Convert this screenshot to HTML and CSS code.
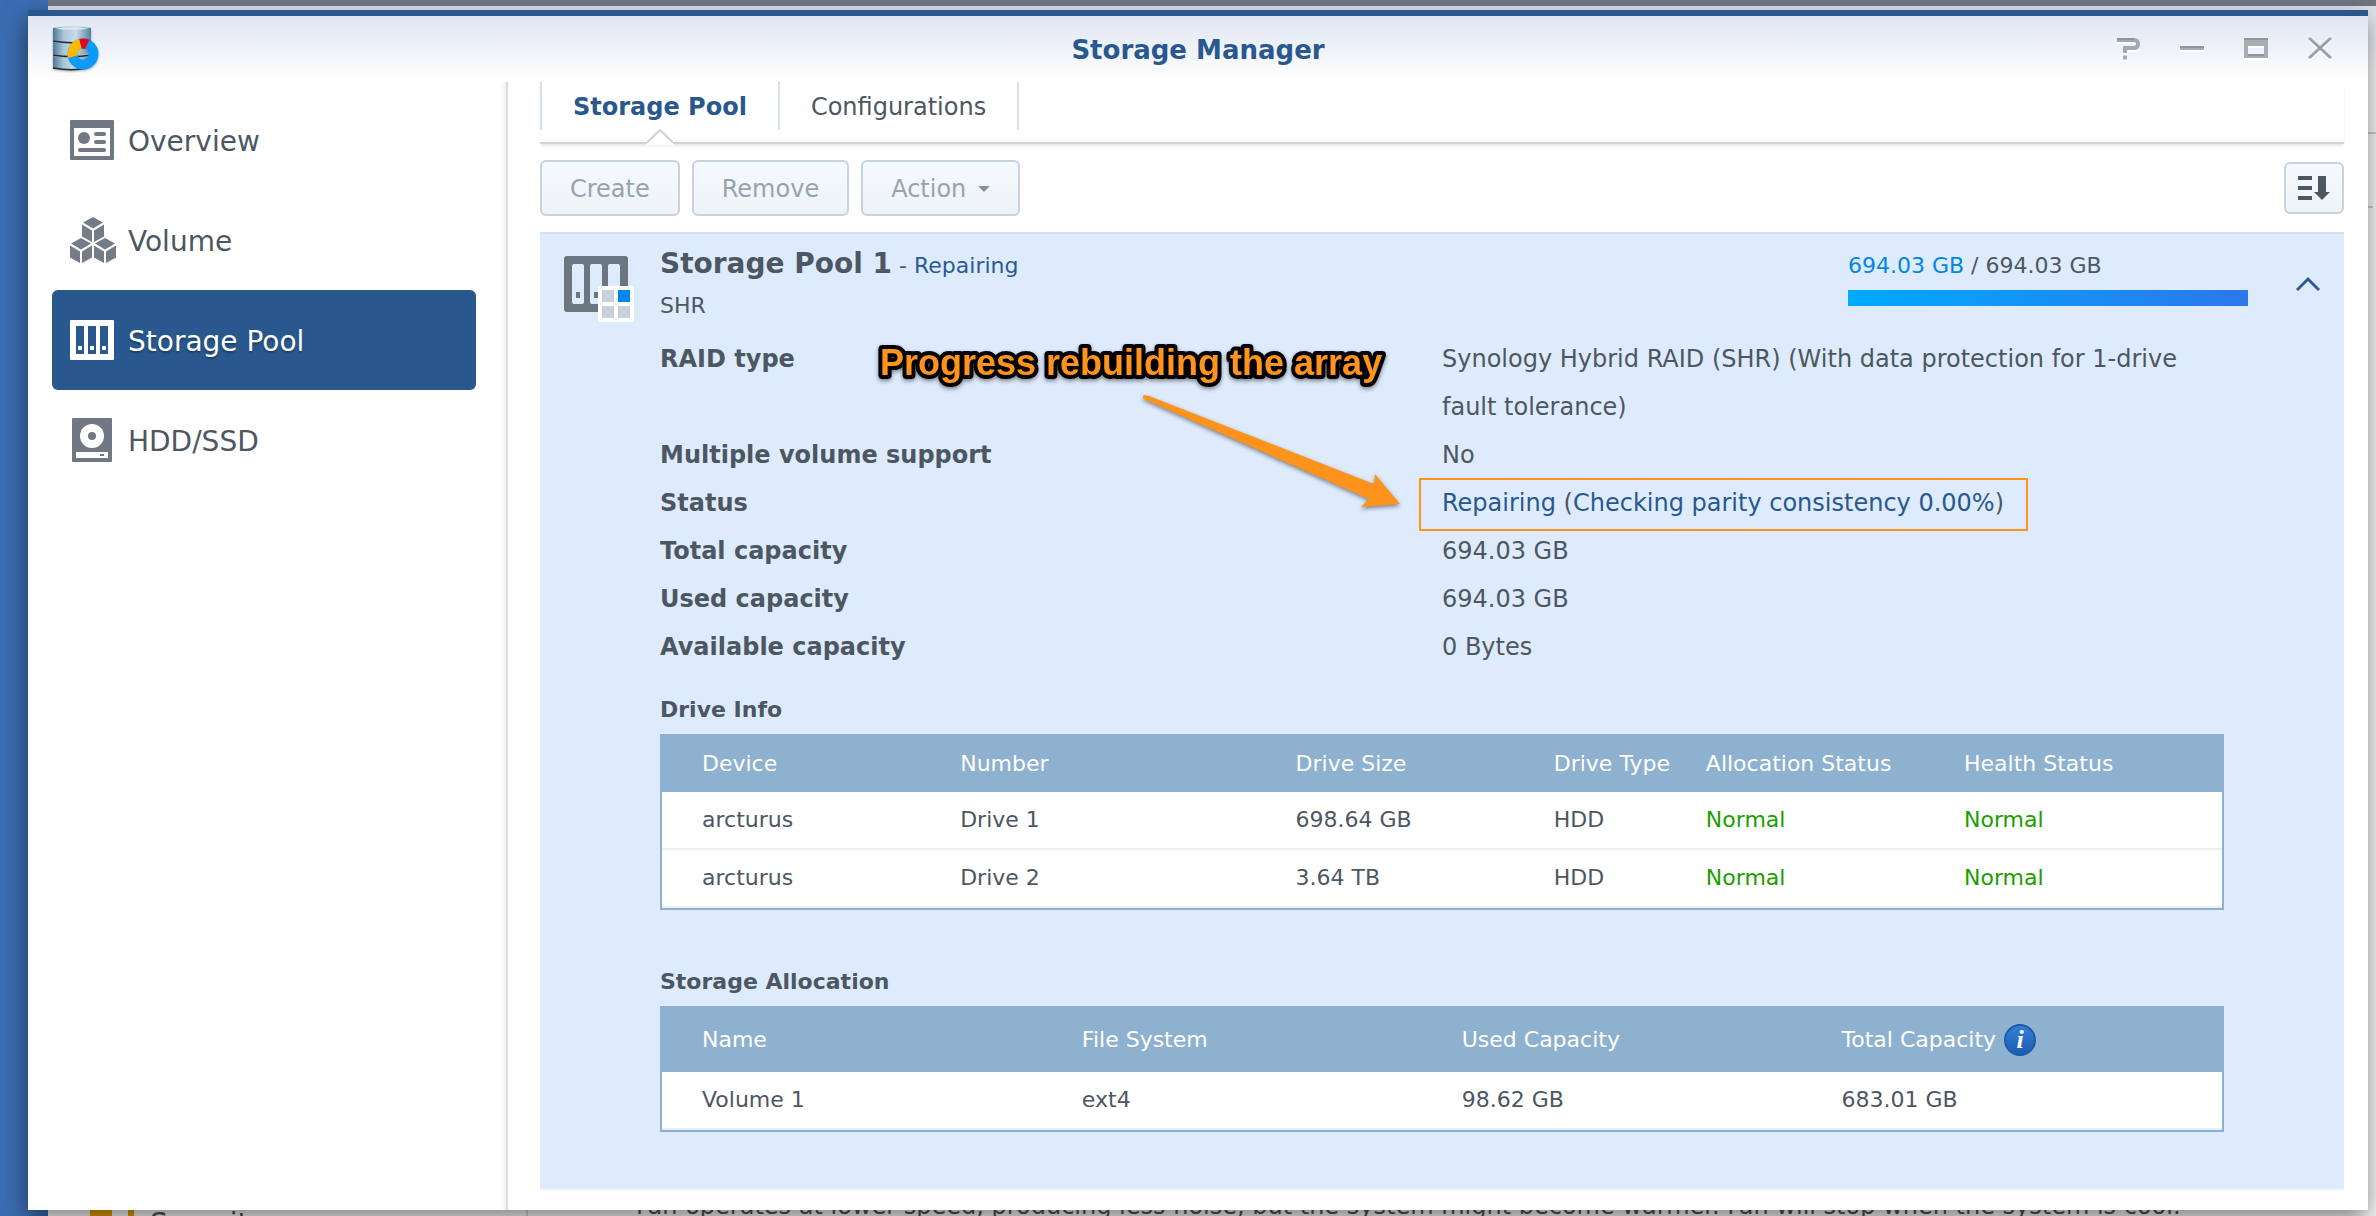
FILE: index.html
```html
<!DOCTYPE html>
<html lang="en">
<head>
<meta charset="utf-8">
<meta name="viewport" content="width=device-width, initial-scale=1">
<title>Storage Manager</title>
<link rel="stylesheet" href="styles.css">
</head>
<body>
<div class="back-window" aria-hidden="true">
  <div class="back-bar"></div>
  <div class="back-head"></div>
  <div class="back-row"></div>
  <div class="back-foot">
    <span class="back-nav"><span class="back-shield"></span>Security</span>
    <span class="back-note">Fan operates at lower speed, producing less noise, but the system might become warmer. Fan will stop when the system is cool.</span>
  </div>
</div>

<div class="window">
  <header class="titlebar">
    <svg class="app-icon" width="48" height="46" viewBox="0 0 48 46" aria-hidden="true">
      <defs>
        <linearGradient id="can" x1="0" x2="1"><stop offset="0" stop-color="#4c7796"/><stop offset=".28" stop-color="#a9c6da"/><stop offset=".6" stop-color="#c9dcea"/><stop offset="1" stop-color="#54819f"/></linearGradient>
      </defs>
      <path d="M1 2Q20-1 39 2V14Q20 18 1 14Z" fill="url(#can)"/>
      <path d="M1 16Q20 19 39 16V27Q20 31 1 28Z" fill="url(#can)"/>
      <path d="M1 30Q20 33 39 30V41Q20 45 1 42Z" fill="url(#can)"/>
      <path d="M1 15Q20 18.500 39 15M1 29Q20 32.500 39 29M1 42Q20 45.500 36 42" fill="none" stroke="#1d2a33" stroke-width="1.300"/>
      <path d="M3 2.500Q20 .500 37 2.500Q20 5 3 2.500Z" fill="#dfe9f0"/>
      <g fill="none" stroke-width="10">
        <circle cx="31" cy="28" r="10.500" stroke="#0a9bfb"/>
        <circle cx="31" cy="28" r="10.500" stroke="#fdb900" pathLength="360" stroke-dasharray="91 269" stroke-dashoffset="-165"/>
        <circle cx="31" cy="28" r="10.500" stroke="#e2041b" pathLength="360" stroke-dasharray="38 322" stroke-dashoffset="-256"/>
      </g>
    </svg>
    <h1 class="title">Storage Manager</h1>
    <div class="controls">
      <button class="control" aria-label="Help"><svg width="24" height="24" viewBox="0 0 24 24"><path d="M1 4H18Q22 4 22 8T18 12H9V17M7 21.500H11" fill="none" stroke="#a4aab1" stroke-width="4"/><path d="M1 3H18" stroke="#8f959c" stroke-width="2"/></svg></button>
      <button class="control" aria-label="Minimize"><svg width="24" height="24" viewBox="0 0 24 24"><path d="M0 12H24" stroke="#a7adb5" stroke-width="4"/><path d="M0 11H24" stroke="#8f959c" stroke-width="2"/></svg></button>
      <button class="control" aria-label="Maximize"><svg width="24" height="24" viewBox="0 0 24 24"><path d="M0 2H24V22H0ZM4 10V18H20V10Z" fill="#a7adb5" fill-rule="evenodd"/><path d="M0 3H24M4 19H20" stroke="#8f959c" stroke-width="2"/></svg></button>
      <button class="control" aria-label="Close"><svg width="24" height="24" viewBox="0 0 24 24"><path d="M1 2 23 22M23 2 1 22" stroke="#9aa0a7" stroke-width="3"/></svg></button>
    </div>
  </header>

  <div class="body">
    <nav class="sidebar">
      <a class="nav-item" href="#overview">
        <svg width="46" height="46" viewBox="0 0 46 46" fill="#707884"><path fill-rule="evenodd" d="M1 3H43Q44 3 44 4V42Q44 43 43 43H1Q0 43 0 42V4Q0 3 1 3ZM4 11V39H40V11Z"/><circle cx="14" cy="21" r="6"/><path d="M26 17H34M26 25H34M10 33H34" stroke="#707884" stroke-width="4" stroke-linecap="round"/></svg>
        <span class="nav-label">Overview</span></a>
      <a class="nav-item" href="#volume">
        <svg width="46" height="46" viewBox="0 0 46 46" fill="#747c87"><g id="cube"><path d="M23 0 33 5.500 23 11.500 13 5.500Z"/><path d="M12 7.500 22 13.500V25L12 19.500ZM34 7.500 24 13.500V25L34 19.500Z"/></g><use href="#cube" x="-12" y="21"/><use href="#cube" x="12" y="21"/></svg>
        <span class="nav-label">Volume</span></a>
      <a class="nav-item selected" href="#pool" aria-current="page">
        <svg width="46" height="46" viewBox="0 0 46 46" fill="#fff"><path fill-rule="evenodd" d="M1 3H43Q44 3 44 4V42Q44 43 43 43H1Q0 43 0 42V4Q0 3 1 3ZM6 9V37H14V9ZM18 9V37H26V9ZM30 9V37H38V9Z"/><path d="M8 29h4v4h-4zM20 29h4v4h-4zM32 29h4v4h-4z"/></svg>
        <span class="nav-label">Storage Pool</span></a>
      <a class="nav-item" href="#hdd">
        <svg width="46" height="46" viewBox="0 0 46 46"><rect x="2" y="1" width="40" height="44" rx="1" fill="#707884"/><circle cx="22" cy="19" r="12" fill="#fff"/><circle cx="22" cy="19" r="4" fill="#707884"/><path d="M6 35H38V41H6Z" fill="#fff"/><path d="M30 37h4v2h-4z" fill="#707884"/></svg>
        <span class="nav-label">HDD/SSD</span></a>
    </nav>

    <main class="main">
      <div class="tabs" role="tablist">
        <button class="tab active" role="tab" aria-selected="true">Storage Pool
          <svg class="tab-caret" width="26" height="16" viewBox="0 0 26 16" aria-hidden="true"><path d="M0 16V13L13 1 26 13V16Z" fill="#fff"/><path d="M0 13.500 13 1 26 13.500" fill="none" stroke="#d2d2d2" stroke-width="2"/></svg>
        </button>
        <button class="tab" role="tab" aria-selected="false">Configurations</button>
      </div>

      <div class="toolbar">
        <button class="btn" disabled>Create</button>
        <button class="btn" disabled>Remove</button>
        <button class="btn" disabled>Action <span class="arrow-down"></span></button>
        <button class="btn sort" aria-label="Sort"><svg width="34" height="26" viewBox="0 0 34 26" fill="#4d5762"><path d="M0 1H14V5H0ZM0 11H14V15H0ZM0 21H14V25H0ZM20 1H28V17H32L24 25 16 17H20Z"/></svg></button>
      </div>

      <section class="pool">
        <div class="pool-head">
          <svg class="pool-icon" width="72" height="68" viewBox="0 0 72 68" aria-hidden="true"><path fill="#6c7680" fill-rule="evenodd" d="M3 0H61Q64 0 64 3V53Q64 56 61 56H3Q0 56 0 53V3Q0 0 3 0ZM8 10V46Q8 48 10 48H18Q20 48 20 46V10Q20 8 18 8H10Q8 8 8 10ZM26 10V46Q26 48 28 48H36Q38 48 38 46V10Q38 8 36 8H28Q26 8 26 10ZM44 10V46Q44 48 46 48H54Q56 48 56 46V10Q56 8 54 8H46Q44 8 44 10Z"/><path fill="#6c7680" d="M12 36h4v6h-4zM30 36h4v6h-4z"/><path fill="#fff" d="M34 30H70V66H34Z"/><path fill="#c7d1db" d="M38 34h12v12h-12zM38 50h12v12h-12zM54 50h12v12h-12z"/><path fill="#0086f0" d="M54 34h12v12h-12z"/></svg>
          <div class="pool-name">
            <h2 class="pool-title">Storage Pool 1<span class="pool-note"> - <span class="pool-state">Repairing</span></span></h2>
            <p class="pool-sub">SHR</p>
          </div>
          <div class="usage">
            <p class="usage-text"><span class="used">694.03 GB</span> / 694.03 GB</p>
            <div class="bar"></div>
          </div>
          <button class="collapse" aria-label="Collapse"><svg width="24" height="16" viewBox="0 0 24 16"><path d="M1 14 12 3 23 14" fill="none" stroke="#2a5a96" stroke-width="3"/></svg></button>
        </div>

        <div class="pool-body">
          <dl class="details">
            <dt>RAID type</dt><dd>Synology Hybrid RAID (SHR) (With data protection for 1-drive fault tolerance)</dd>
            <dt>Multiple volume support</dt><dd>No</dd>
            <dt>Status</dt><dd><span class="status"><b>Repairing</b> (<b>Checking parity consistency 0.00%</b>)</span></dd>
            <dt>Total capacity</dt><dd>694.03 GB</dd>
            <dt>Used capacity</dt><dd>694.03 GB</dd>
            <dt>Available capacity</dt><dd>0 Bytes</dd>
          </dl>

          <h3 class="table-title" id="drives">Drive Info</h3>
          <table class="grid drives" aria-labelledby="drives">
            <thead><tr><th>Device</th><th>Number</th><th>Drive Size</th><th>Drive Type</th><th>Allocation Status</th><th>Health Status</th></tr></thead>
            <tbody>
              <tr><td>arcturus</td><td>Drive 1</td><td>698.64 GB</td><td>HDD</td><td class="ok">Normal</td><td class="ok">Normal</td></tr>
              <tr><td>arcturus</td><td>Drive 2</td><td>3.64 TB</td><td>HDD</td><td class="ok">Normal</td><td class="ok">Normal</td></tr>
            </tbody>
          </table>

          <h3 class="table-title" id="allocation">Storage Allocation</h3>
          <table class="grid allocation" aria-labelledby="allocation">
            <thead><tr><th>Name</th><th>File System</th><th>Used Capacity</th><th><span class="with-info">Total Capacity <span class="info">i</span></span></th></tr></thead>
            <tbody><tr><td>Volume 1</td><td>ext4</td><td>98.62 GB</td><td>683.01 GB</td></tr></tbody>
          </table>

          <svg class="note" width="560" height="190" viewBox="0 0 560 190">
            <text class="note-text" x="30" y="40">Progress rebuilding the array</text>
            <path class="note-arrow" d="M294 60 299 61 524 149 525 139 550 169 511 172 519 164 294 64Q292 62 294 60Z"/>
          </svg>
        </div>
      </section>
    </main>
  </div>
</div>
</body>
</html>
```
FILE: styles.css
```css
* { box-sizing: border-box; }

body {
  margin: 0;
  height: 100vh;
  overflow: hidden;
  position: relative;
  padding: 10px 8px 6px 28px;
  background: #3b6cb2;
  color: #4d5762;
  font: 24px/48px "DejaVu Sans", Verdana, sans-serif;
}

h1, h2, h3, p, dl, dd { margin: 0; }
button { font: inherit; color: inherit; border: 0; background: none; padding: 0; }
svg { display: block; }

/* window behind the main one */
.back-window {
  position: absolute;
  inset: 0 0 0 48px;
  display: flex;
  flex-direction: column;
  background: #fff;
}
.back-bar { height: 6px; background: #707781; flex: none; }
.back-head { height: 128px; background: linear-gradient(#dfe3ec, #fff 66px); border-bottom: 2px solid #d2d2d2; flex: none; }
.back-row { height: 74px; margin-right: 3px; border-bottom: 2px solid #c8d3df; flex: none; }
.back-foot {
  margin-top: auto;
  height: 20px;
  overflow: hidden;
  display: flex;
  align-items: flex-start;
  line-height: 28px;
}
.back-nav { width: 480px; display: flex; gap: 16px; padding: 14px 0 0 42px; font-size: 28px; border-right: 2px solid #ddd; flex: none; }
.back-shield { width: 44px; height: 28px; border: solid #eaa000; border-width: 0 6px 0 22px; }
.back-note { padding-left: 108px; margin-top: -4px; white-space: nowrap; }

.window {
  position: relative;
  height: 100%;
  display: flex;
  flex-direction: column;
  border-top: 6px solid #29588e;
  background: #fff linear-gradient(#dfe6f2, #fff) no-repeat 0 0 / 100% 66px;
  box-shadow: 0 10px 24px rgba(0, 0, 0, .5);
}

.titlebar { height: 66px; flex: none; display: grid; grid-template-columns: 1fr auto 1fr; align-items: start; padding: 0 24px; }
.app-icon { margin-top: 10px; filter: drop-shadow(0 1px 1px rgba(0, 0, 0, .3)); }
.title { font-size: 26px; line-height: 32px; padding-top: 18px; color: #29588e; }
.controls { display: flex; justify-content: flex-end; gap: 40px; padding: 20px 12px 0 0; }
.control { filter: drop-shadow(0 2px 0 #fff); }

.body { flex: 1; min-height: 0; display: flex; }

.sidebar {
  width: 480px;
  flex: none;
  padding: 8px 30px 0 24px;
  border-right: 2px solid #dcdcdc;
  background: linear-gradient(to left, #f1f1f1, #fff 6px);
}
.nav-item {
  display: flex;
  align-items: center;
  gap: 12px;
  height: 100px;
  padding-left: 18px;
  border-radius: 6px;
  color: inherit;
  font-size: 28px;
  text-decoration: none;
}
.nav-label { padding-top: 4px; }
.nav-item.selected { background: #29588e; color: #fff; text-shadow: 0 2px 2px rgba(0, 0, 0, .3); }

.main { flex: 1; min-width: 0; display: flex; flex-direction: column; padding: 0 24px 20px 32px; }

.tabs {
  display: flex;
  height: 62px;
  flex: none;
  border-bottom: 2px solid #d2d2d2;
  box-shadow: 0 3px 3px -1px #e6e6e6;
}
.tab { position: relative; height: 48px; padding: 2px 31px 0; line-height: 46px; border-right: 2px solid #d5e0ec; }
.tab:first-child { border-left: 2px solid #d5e0ec; }
.tab.active { color: #29588e; font-weight: bold; }
.tab-caret { position: absolute; left: calc(50% - 13px); top: 47px; }

.toolbar { display: flex; align-items: center; gap: 12px; height: 88px; flex: none; }
.btn {
  display: flex;
  align-items: center;
  gap: 12px;
  height: 56px;
  padding: 2px 28px 0;
  border: 2px solid #c8d3df;
  border-radius: 6px;
  background: linear-gradient(#f5faff, #eef3f8);
}
.btn:disabled { color: #98a3ae; }
.arrow-down { border: 6px solid transparent; border-top-color: #8794a0; border-bottom: 0; }
.sort { margin-left: auto; width: 60px; height: 52px; padding: 0 0 0 12px; }

.pool { flex: 1; min-height: 0; padding: 0 24px; background: #deebfd; border: solid #d3e0ec; border-width: 2px 0; border-bottom-color: #e8eff5; }
.pool-head { display: flex; align-items: flex-start; height: 101px; }
.pool-icon { margin-top: 22px; }
.pool-name { flex: 1; padding: 10px 0 0 24px; }
.pool-title { font-size: 28px; line-height: 40px; }
.pool-note { font-size: 22px; font-weight: normal; }
.pool-state { color: #2a5a96; }
.pool-sub { font-size: 22px; line-height: 40px; }
.usage { width: 400px; font-size: 22px; }
.usage-text { line-height: 40px; padding-top: 12px; }
.used { color: #0086e8; }
.bar { height: 16px; margin-top: 4px; background: linear-gradient(to right, #0af, #2c78ea); }
.collapse { margin: 42px 0 0 48px; }

.pool-body { position: relative; padding: 0 96px; }
.details { display: grid; grid-template-columns: 1fr 1fr; }
dt { font-weight: bold; }
.status { position: relative; display: inline-block; }
.status b { color: #29588e; font-weight: normal; }
.status::after { content: ""; position: absolute; inset: -1px -24px -4px -23px; border: 2px solid #ff931c; }

.table-title { margin-top: 21px; font-size: 22px; line-height: 36px; }
.drives + .table-title { margin-top: 54px; }
.grid { width: 100%; margin-top: 6px; border: 2px solid #8db1ce; border-spacing: 0; table-layout: fixed; background: #fff; font-size: 22px; line-height: 32px; }
.grid th, .grid td { padding: 12px 0 12px 40px; text-align: left; font-weight: normal; white-space: nowrap; }
.grid th { color: #fff; background: #8db1ce; }
.grid td { border-bottom: 2px solid #e9eff3; }
.grid .ok { color: #1b9e00; }
.drives th:nth-child(1), .drives th:nth-child(3), .drives th:nth-child(5) { width: 16.55%; }
.drives th:nth-child(2) { width: 21.5%; }
.drives th:nth-child(4) { width: 9.75%; }
.allocation th { height: 64px; }
.allocation th:not(:last-child) { width: 24.35%; }
.with-info { display: flex; align-items: center; gap: 8px; }
.info {
  width: 32px;
  height: 32px;
  border: 2px solid #1c5ba6;
  border-radius: 50%;
  background: linear-gradient(#3380d6, #1d5cb5);
  text-align: center;
  font: italic bold 26px/28px "Liberation Serif", serif;
}

.note { position: absolute; left: 286px; top: 0; overflow: visible; pointer-events: none; filter: drop-shadow(0 2px 2px rgba(0, 0, 0, .45)); }
.note-text { font: bold 36px "Liberation Sans", Arial, sans-serif; fill: #ff931c; stroke: #000; stroke-width: 8px; stroke-linejoin: round; paint-order: stroke; }
.note-arrow { fill: #ff931c; }
```
